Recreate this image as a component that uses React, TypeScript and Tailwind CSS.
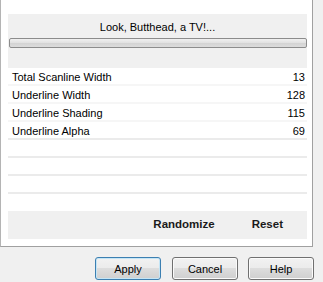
import React from "react";

const rows: { label: string; value: string }[] = [
  { label: "Total Scanline Width", value: "13" },
  { label: "Underline Width", value: "128" },
  { label: "Underline Shading", value: "115" },
  { label: "Underline Alpha", value: "69" },
];

function Btn({ label, primary }: { label: string; primary?: boolean }) {
  return (
    <button
      className={
        "w-[66px] h-[23px] rounded-[3px] border text-[11px] text-black flex items-center justify-center pt-[1px] bg-[linear-gradient(#f2f2f2_0%,#ebebeb_50%,#dddddd_50%,#cfcfcf_100%)] " +
        (primary
          ? "border-[#3c7fb1] shadow-[inset_0_0_0_1px_#c4e5f6]"
          : "border-[#707070] shadow-[inset_0_0_0_1px_#fbfbfb]")
      }
    >
      {label}
    </button>
  );
}

export default function App() {
  return (
    <div className="w-[323px] h-[282px] bg-[#f0f0f0] font-['Liberation_Sans',Arial,sans-serif] text-[11px] text-black overflow-hidden">
      <div className="w-[313px] h-[247px] bg-white border-l border-l-[#b4b4b4] border-r border-r-[#a0a0a0] border-b border-b-[#a0a0a0] pt-[14px] pl-[7px] pr-[5px]">
        <div className="w-[299px] flex flex-col">
          <div className="h-[54px] bg-[#f0f0f0] flex flex-col">
            <div className="pt-[7px] leading-[13px] h-[20px] text-center">
              Look, Butthead, a TV!...
            </div>
            <div className="mt-[4px] ml-[1px] h-[10px] rounded-[2px] border border-[#8c8c8c] bg-[linear-gradient(#f0f0f0_0%,#e2e2e2_45%,#d4d4d4_55%,#dcdcdc_100%)]" />
          </div>
          <div className="flex flex-col bg-white">
            {rows.map((r, i) => (
              <div
                key={r.label}
                className={
                  "h-[18px] flex items-start justify-between pl-[4px] pr-[2px] pt-[3px] leading-[13px] border-b-2 " +
                  (i < 3 ? "border-[#f6f6f6]" : "border-[#ebebeb]")
                }
              >
                <span>{r.label}</span>
                <span>{r.value}</span>
              </div>
            ))}
            <div className="h-[18px] border-b-2 border-[#ebebeb]" />
            <div className="h-[18px] border-b-2 border-[#ebebeb]" />
            <div className="h-[18px] border-b-2 border-[#ebebeb]" />
            <div className="h-[17px]" />
          </div>
          <div className="h-[28px] bg-[#f0f0f0] flex items-center justify-end gap-[37px] pr-[24px] font-bold text-[11.5px] text-[#1a1a1a]">
            <span>Randomize</span>
            <span>Reset</span>
          </div>
        </div>
      </div>
      <div className="mt-[10px] flex justify-end pr-[9px] gap-[10px]">
        <div className="mr-[1px]">
          <Btn label="Apply" primary />
        </div>
        <Btn label="Cancel" />
        <Btn label="Help" />
      </div>
    </div>
  );
}
